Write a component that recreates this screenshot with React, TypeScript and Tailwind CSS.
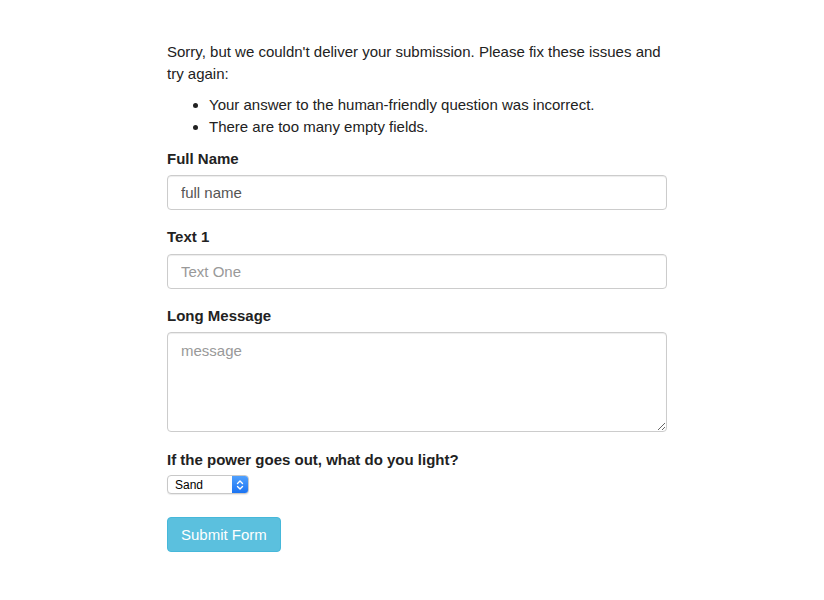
const errors = [
  'Your answer to the human-friendly question was incorrect.',
  'There are too many empty fields.',
];

const App = () => {
  return (
    <div className="min-h-[600px] bg-white font-['Liberation_Sans',Arial,sans-serif] text-[15px] leading-[22px] text-[#333]">
      <form className="ml-[167px] flex w-[500px] flex-col pt-[41px]" onSubmit={(e) => e.preventDefault()}>
        <p className="text-[#222]">
          Sorry, but we couldn't deliver your submission. Please fix these issues and try again:
        </p>
        <ul className="mt-[9px] list-disc pl-[42px] text-[#222]">
          {errors.map((err) => (
            <li key={err}>{err}</li>
          ))}
        </ul>

        <label className="mt-[10px] mb-[5px] font-bold text-[#222]">Full Name</label>
        <input
          type="text"
          defaultValue="full name"
          className="h-[35px] w-full rounded-[4px] border border-[#ccc] px-[13px] text-[15px] text-[#555] shadow-[inset_0_1px_1px_rgba(0,0,0,0.075)] outline-none"
        />

        <label className="mt-[16px] mb-[6px] font-bold text-[#222]">Text 1</label>
        <input
          type="text"
          placeholder="Text One"
          className="h-[35px] w-full rounded-[4px] border border-[#ccc] px-[13px] text-[15px] text-[#555] shadow-[inset_0_1px_1px_rgba(0,0,0,0.075)] outline-none placeholder:text-[#999]"
        />

        <label className="mt-[16px] mb-[5px] font-bold text-[#222]">Long Message</label>
        <textarea
          placeholder="message"
          className="h-[100px] w-full resize-y rounded-[4px] border border-[#ccc] px-[13px] py-[7px] text-[15px] leading-[22px] text-[#555] shadow-[inset_0_1px_1px_rgba(0,0,0,0.075)] outline-none placeholder:text-[#999]"
        />

        <label className="mt-[17px] mb-[4px] font-bold text-[#222]">If the power goes out, what do you light?</label>
        <div className="flex h-[19px] w-[82px] items-stretch overflow-hidden rounded-[4px] border border-[#c8c8c8] bg-white shadow-[0_1px_1px_rgba(0,0,0,0.08)]">
          <span className="flex flex-1 items-center pl-[7px] text-[12px] leading-none text-black">Sand</span>
          <span className="flex w-[16px] items-center justify-center bg-gradient-to-b from-[#4fa0fd] to-[#1a73f2]">
            <svg width="8" height="12" viewBox="0 0 8 12" fill="none" stroke="white" strokeWidth="1.4" strokeLinecap="round" strokeLinejoin="round">
              <path d="M1.5 4.5 L4 2 L6.5 4.5" />
              <path d="M1.5 7.5 L4 10 L6.5 7.5" />
            </svg>
          </span>
        </div>

        <div className="mt-[23px]">
          <button
            type="submit"
            className="h-[35px] rounded-[4px] border border-[#46b8da] bg-[#5bc0de] px-[13px] text-[15px] text-white"
          >
            Submit Form
          </button>
        </div>
      </form>
    </div>
  );
};

export default App;
